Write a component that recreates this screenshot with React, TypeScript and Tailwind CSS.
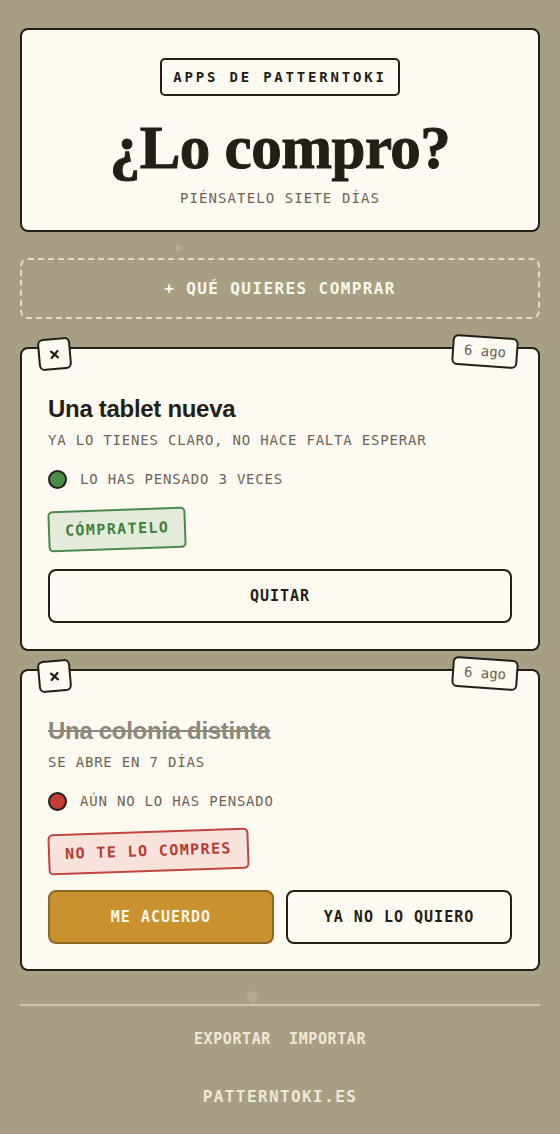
import React from "react";

const mono = "font-['DejaVu_Sans_Mono','Liberation_Mono',monospace]";
const sans = "font-['Liberation_Sans','Arial',sans-serif]";
const serif = "font-['Liberation_Serif','Times_New_Roman',serif]";

function Badges() {
  return (
    <>
      <div className="absolute left-[16px] top-[-11px] w-[33px] h-[32px] rounded-[6px] border-2 border-[#221f18] bg-[#fefaf2] flex items-center justify-center -rotate-[5deg]">
        <svg width="11" height="11" viewBox="0 0 12 12">
          <path d="M2.5 2.5 L9.5 9.5 M9.5 2.5 L2.5 9.5" stroke="#221f18" strokeWidth="2.4" strokeLinecap="round" />
        </svg>
      </div>
      <div className={`absolute right-[20px] top-[-13px] w-[66px] h-[31px] rounded-[6px] border-2 border-[#221f18] bg-[#fefaf2] flex items-center justify-center rotate-[4deg] ${mono} text-[14px] text-[#6b6556]`}>
        6 ago
      </div>
    </>
  );
}

export default function App() {
  return (
    <div className="relative min-h-[1134px] w-full bg-[#a89e84] px-5 pt-7 pb-6">
      <div className="absolute left-[175px] top-[245px] w-[6px] h-[6px] rounded-full bg-[#b3ab93]" />
      <div className="absolute left-[247px] top-[991px] w-[11px] h-[11px] rounded-full bg-[#b2aa92]" />

      {/* Header */}
      <div className="rounded-[8px] border-2 border-[#221f18] bg-[#fefaf2] h-[204px] flex flex-col items-center pt-[28px]">
        <div className={`h-[38px] w-[240px] rounded-[5px] border-2 border-[#221f18] flex items-center justify-center ${mono} font-bold text-[14px] tracking-[2.8px] text-[#221f18]`}>
          APPS DE PATTERNTOKI
        </div>
        <div className={`${serif} font-bold text-[61px] leading-[60px] mt-[22px] text-[#221f18] tracking-[-0.5px] [-webkit-text-stroke:1px_#221f18]`}>
          ¿Lo compro?
        </div>
        <div className={`${mono} text-[14px] tracking-[1.1px] text-[#6b6556] mt-[10px]`}>
          PIÉNSATELO SIETE DÍAS
        </div>
      </div>

      {/* Add */}
      <div className={`mt-[26px] h-[61px] rounded-[8px] border-2 border-dashed border-[#e2dbc8] flex items-center justify-center ${mono} font-bold text-[16px] tracking-[1.4px] text-[#fbf6ea]`}>
        + QUÉ QUIERES COMPRAR
      </div>

      {/* Card 1 */}
      <div className="relative mt-[28px] rounded-[8px] border-2 border-[#221f18] bg-[#fefaf2] px-[26px] pt-[47px] pb-[26px]">
        <Badges />
        <div className={`${sans} font-bold text-[24px] leading-[26px] tracking-[-0.3px] text-[#221f18]`}>Una tablet nueva</div>
        <div className={`${mono} text-[14px] leading-[20px] tracking-[0.8px] text-[#6b6556] mt-[8px]`}>YA LO TIENES CLARO, NO HACE FALTA ESPERAR</div>
        <div className="flex items-center gap-[13px] mt-[19px]">
          <div className="w-[19px] h-[19px] rounded-full border-2 border-[#221f18] bg-[#4b8c4b]" />
          <div className={`${mono} text-[14px] leading-[20px] tracking-[0.8px] text-[#6b6556]`}>LO HAS PENSADO 3 VECES</div>
        </div>
        <div className="mt-[20px] flex">
          <div className={`-rotate-[2deg] h-[41px] px-[15px] rounded-[5px] border-2 border-[#4b8a4e] bg-[#e4ebdb] flex items-center ${mono} font-bold text-[15px] tracking-[1.4px] text-[#3f8040]`}>
            CÓMPRATELO
          </div>
        </div>
        <div className={`mt-[19px] h-[54px] rounded-[8px] border-2 border-[#221f18] flex items-center justify-center ${mono} font-bold text-[15px] tracking-[1px] text-[#221f18]`}>
          QUITAR
        </div>
      </div>

      {/* Card 2 */}
      <div className="relative mt-[18px] rounded-[8px] border-2 border-[#221f18] bg-[#fefaf2] px-[26px] pt-[47px] pb-[25px]">
        <Badges />
        <div className={`${sans} font-bold text-[24px] leading-[26px] tracking-[-0.3px] text-[#8c887c] line-through`}>Una colonia distinta</div>
        <div className={`${mono} text-[14px] leading-[20px] tracking-[0.8px] text-[#6b6556] mt-[8px]`}>SE ABRE EN 7 DÍAS</div>
        <div className="flex items-center gap-[13px] mt-[19px]">
          <div className="w-[19px] h-[19px] rounded-full border-2 border-[#221f18] bg-[#c63d33]" />
          <div className={`${mono} text-[14px] leading-[20px] tracking-[0.8px] text-[#6b6556]`}>AÚN NO LO HAS PENSADO</div>
        </div>
        <div className="mt-[20px] flex">
          <div className={`-rotate-[2deg] h-[41px] px-[15px] rounded-[5px] border-2 border-[#c2463e] bg-[#f7e2dc] flex items-center ${mono} font-bold text-[15px] tracking-[1.4px] text-[#b83a31]`}>
            NO TE LO COMPRES
          </div>
        </div>
        <div className="mt-[18px] grid grid-cols-2 gap-[12px]">
          <div className={`h-[54px] rounded-[8px] border-2 border-[#8c6a22] bg-[#c9922e] flex items-center justify-center ${mono} font-bold text-[15px] tracking-[1px] text-[#fdf6e6]`}>
            ME ACUERDO
          </div>
          <div className={`h-[54px] rounded-[8px] border-2 border-[#221f18] flex items-center justify-center ${mono} font-bold text-[15px] tracking-[1px] text-[#221f18]`}>
            YA NO LO QUIERO
          </div>
        </div>
      </div>

      {/* Footer */}
      <div className="mt-[33px] h-[2px] bg-[#cbc4ae]" />
      <div className={`mt-[22px] flex justify-center gap-[18px] ${mono} font-bold text-[15px] tracking-[0.6px] text-[#efe8d6]`}>
        <span>EXPORTAR</span>
        <span>IMPORTAR</span>
      </div>
      <div className={`mt-[34px] text-center ${mono} font-bold text-[16px] tracking-[1.4px] text-[#efe8d6]`}>
        PATTERNTOKI.ES
      </div>
    </div>
  );
}
